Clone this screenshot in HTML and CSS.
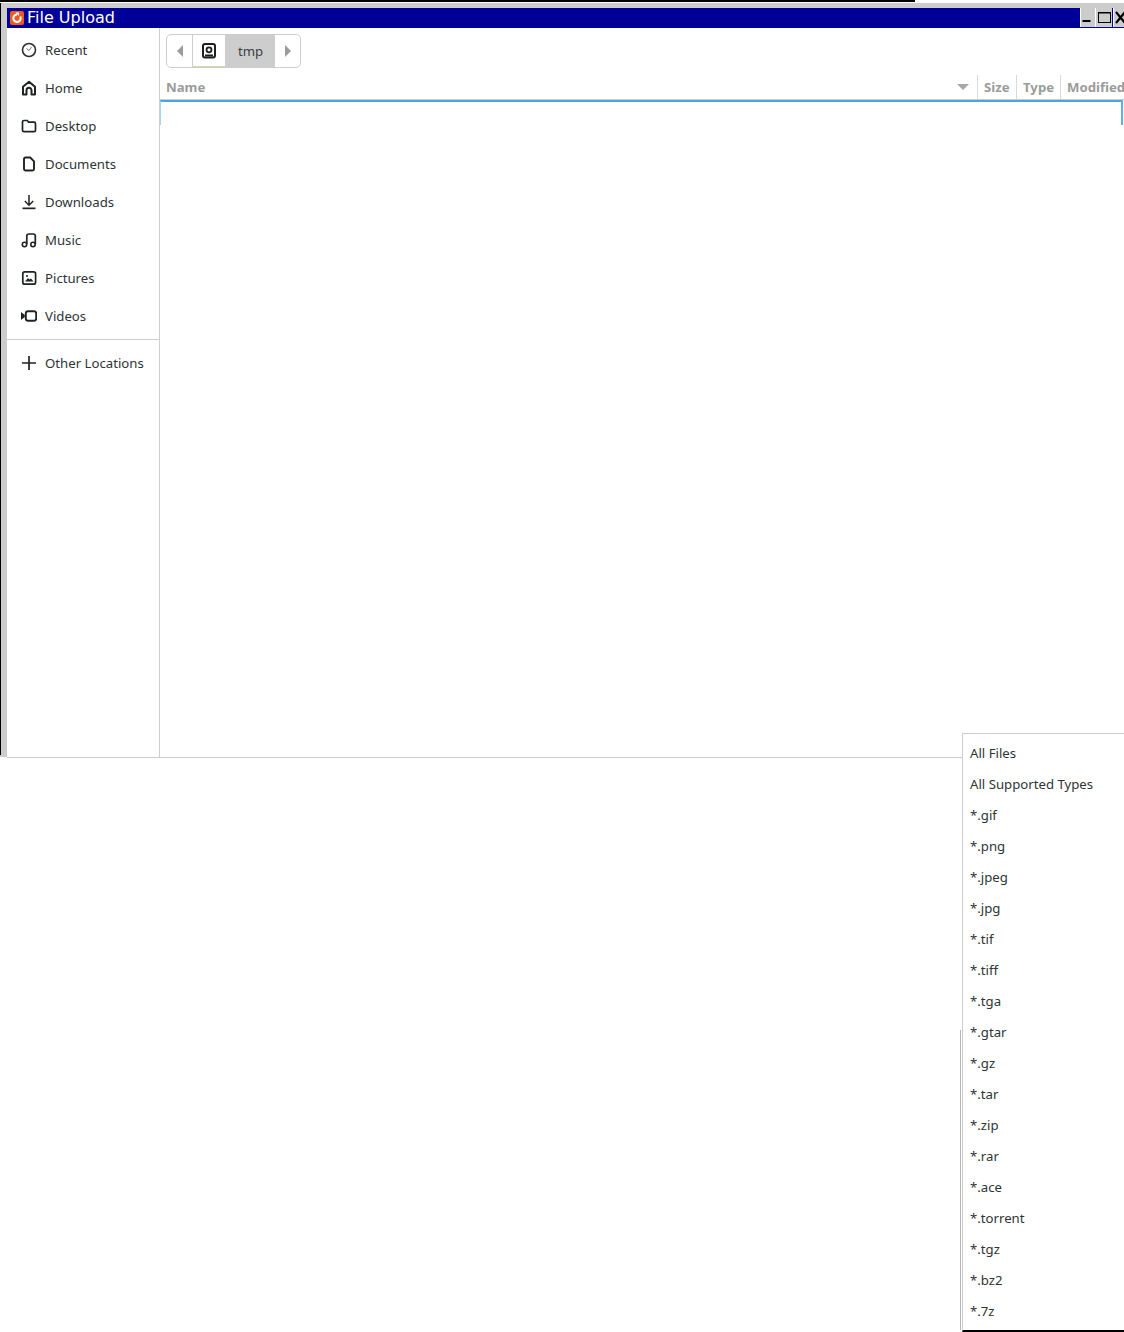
FILE: index.html
```html
<!DOCTYPE html>
<html lang="en">
<head>
<meta charset="utf-8">
<title>File Upload</title>
<link rel="stylesheet" href="styles.css">
</head>
<body>
<div class="strip"><div class="strip-black"></div><div class="strip-rest"></div></div>
<div class="window">
  <div class="titlebar">
    <svg class="app-icon" width="16" height="16" viewBox="0 0 16 16"><rect x="1" y="1" width="14" height="14" rx="2" fill="#ef5a22"/><path d="M8 4.500a3.700 3.700 0 1 0 3.300 2" fill="none" stroke="#fff" stroke-width="2"/><path d="M6.500 2.500h3.500v3.500z" fill="#fff"/></svg>
    <span class="title">File Upload</span>
    <div class="win-buttons">
      <span class="win-btn min"><svg width="15" height="19" viewBox="0 0 15 19"><rect x="1.500" y="12" width="8" height="2" fill="#000"/></svg></span>
      <span class="win-btn max"><svg width="16" height="19" viewBox="0 0 16 19"><rect x="2.500" y="4.500" width="12" height="10" fill="none" stroke="#000"/><rect x="2" y="4" width="13" height="1.500" fill="#000"/></svg></span>
      <span class="win-btn close"><svg width="10" height="19" viewBox="0 0 10 19"><path d="M2 4l9 11M11 4l-9 11" stroke="#000" stroke-width="2.200" fill="none"/></svg></span>
    </div>
  </div>
  <div class="content">
    <aside class="sidebar">
      <ul class="places">
        <li class="place"><svg class="ico" viewBox="0 0 16 16"><circle cx="8" cy="8" r="6.500" fill="none" stroke="#2b2f30" stroke-width="1.600"/><path d="M5.500 6.500L8 8.500l2.500-3.500" fill="none" stroke="#777" stroke-width="1"/></svg>Recent</li>
        <li class="place"><svg class="ico" viewBox="0 0 16 16"><path d="M2 14.500V6.800L8 1.800l6 5v7.700h-3.500v-4.200a2.500 2.500 0 0 0-5 0v4.200z" fill="none" stroke="#1f2324" stroke-width="2" stroke-linejoin="round"/></svg>Home</li>
        <li class="place"><svg class="ico" viewBox="0 0 16 16"><path d="M1.500 12.200V4a1.500 1.500 0 0 1 1.500-1.500h3.300l1.300 1.700h5.400a1.500 1.500 0 0 1 1.500 1.500v6.500a1.500 1.500 0 0 1-1.500 1.500H3a1.500 1.500 0 0 1-1.500-1.500z" fill="none" stroke="#1f2324" stroke-width="1.700"/></svg>Desktop</li>
        <li class="place"><svg class="ico" viewBox="0 0 16 16"><path d="M3 13V3a1.500 1.500 0 0 1 1.500-1.500h4.700l3.800 3.800V13a1.500 1.500 0 0 1-1.500 1.500H4.500A1.500 1.500 0 0 1 3 13z" fill="none" stroke="#1f2324" stroke-width="1.900"/></svg>Documents</li>
        <li class="place"><svg class="ico" viewBox="0 0 16 16"><path d="M8 1v10M3.800 7l4.200 4.200L12.200 7" fill="none" stroke="#1f2324" stroke-width="1.500"/><rect x="1.500" y="13.500" width="13" height="1.700" fill="#1f2324"/></svg>Downloads</li>
        <li class="place"><svg class="ico" viewBox="0 0 16 16"><path d="M5.800 12V4a2 2 0 0 1 2-2h4.500a2 2 0 0 1 2 2v8" fill="none" stroke="#1f2324" stroke-width="1.700"/><circle cx="3.500" cy="12.500" r="2.200" fill="none" stroke="#1f2324" stroke-width="1.600"/><circle cx="12" cy="12.500" r="2.200" fill="none" stroke="#1f2324" stroke-width="1.600"/></svg>Music</li>
        <li class="place"><svg class="ico" viewBox="0 0 16 16"><rect x="1.800" y="1.800" width="12.800" height="12.400" rx="2" fill="none" stroke="#1f2324" stroke-width="1.700"/><path d="M4 11.500L7 8l1.500 1.500L10 8.500l2.500 3z" fill="#1f2324"/><circle cx="6" cy="6" r="1" fill="#1f2324"/></svg>Pictures</li>
        <li class="place"><svg class="ico" viewBox="0 0 16 16"><path d="M0 4l3.800 3v2L0 12z" fill="#1f2324"/><rect x="4.800" y="3.200" width="10.400" height="9.600" rx="2.200" fill="none" stroke="#1f2324" stroke-width="1.900"/></svg>Videos</li>
      </ul>
      <div class="sep"></div>
      <div class="place other"><svg class="ico" viewBox="0 0 16 16"><path d="M8 1v14M1 8h14" stroke="#1f2324" stroke-width="1.700" fill="none"/></svg>Other Locations</div>
    </aside>
    <main class="main">
      <div class="pathbar">
        <span class="seg arrow"><svg width="6" height="12" viewBox="0 0 6 12"><path d="M6 0v12L0 6z" fill="#9a9c9a"/></svg></span>
        <span class="seg disk"><svg width="14" height="16" viewBox="0 0 14 16"><rect x="1" y="1" width="12" height="13.500" rx="2" fill="#fff" stroke="#1c1f20" stroke-width="2"/><circle cx="7" cy="6.800" r="2.500" fill="none" stroke="#1c1f20" stroke-width="1.800"/><rect x="3" y="11.500" width="8" height="2" fill="#1c1f20"/></svg></span>
        <span class="seg crumb">tmp</span>
        <span class="seg arrow last"><svg width="6" height="12" viewBox="0 0 6 12"><path d="M0 0v12l6-6z" fill="#9a9c9a"/></svg></span>
      </div>
      <div class="columns">
        <div class="col name">Name<svg width="12" height="6" viewBox="0 0 12 6"><path d="M0 0h12L6 6z" fill="#a5a7a5"/></svg></div>
        <div class="col size">Size</div>
        <div class="col type">Type</div>
        <div class="col last">Modified</div>
      </div>
      <div class="listing"></div>
    </main>
  </div>
</div>
<div class="dropdown-shadow"></div>
<ul class="dropdown">
  <li>All Files</li>
  <li>All Supported Types</li>
  <li>*.gif</li>
  <li>*.png</li>
  <li>*.jpeg</li>
  <li>*.jpg</li>
  <li>*.tif</li>
  <li>*.tiff</li>
  <li>*.tga</li>
  <li>*.gtar</li>
  <li>*.gz</li>
  <li>*.tar</li>
  <li>*.zip</li>
  <li>*.rar</li>
  <li>*.ace</li>
  <li>*.torrent</li>
  <li>*.tgz</li>
  <li>*.bz2</li>
  <li>*.7z</li>
</ul>
</body>
</html>
```
FILE: styles.css
```css
html, body { margin: 0; padding: 0; background: #fff; }
body { width: 1124px; height: 1332px; overflow: hidden; position: relative; font-family: "Noto Sans", sans-serif; font-size: 13.2px; color: #2e3436; }
ul { list-style: none; margin: 0; padding: 0; }

.strip { height: 3px; display: flex; }
.strip-black { width: 915px; height: 2px; background: #000; }
.strip-rest { flex: 1; }

.window { height: 754px; background: #ccc; padding: 5px 0 0 7px; box-sizing: border-box; position: relative; width: 1124px; }
.window::before { content: ""; position: absolute; left: 0; top: 0; bottom: 2px; width: 1px; background: #000; }

.titlebar { height: 20px; background: #000099; display: flex; align-items: center; color: #fff; }
.app-icon { margin-left: 2px; flex: none; }
.title { font-family: "DejaVu Sans", sans-serif; font-size: 16px; margin-left: 2px; line-height: 20px; }
.win-buttons { margin-left: auto; display: flex; height: 20px; }
.win-btn { background: #ccc; height: 19px; display: block; box-sizing: content-box; border-left: 1px solid #fff; }
.win-btn svg { display: block; }
.win-btn.min { width: 14px; }
.win-btn.max { width: 16px; }
.win-btn.close { width: 10px; overflow: hidden; margin-left: 1px; }

.content { display: flex; height: 729px; background: #fff; border-bottom: 1px solid #cdcdcd; }
.sidebar { width: 152px; flex: none; border-right: 1px solid #cdcdcd; background: #fff; }
.places { padding-top: 3px; }
.place { height: 38px; display: flex; align-items: center; padding-left: 14px; gap: 8px; color: #2e3436; line-height: 38px; }
.ico { width: 16px; height: 16px; flex: none; }
.sep { height: 1px; background: #cdcdcd; margin-top: 4px; }
.other { height: 46px; line-height: 46px; }

.main { flex: 1; min-width: 0; overflow: hidden; }
.pathbar { margin: 6px 0 0 6px; width: 135px; height: 34px; box-sizing: border-box; border: 1px solid #cdcdcd; border-radius: 5px; display: flex; overflow: hidden; background: #fff; }
.seg { display: flex; align-items: center; justify-content: center; }
.arrow { width: 25px; }
.disk { width: 33px; border-left: 1px solid #cdcdcd; box-sizing: border-box; border-bottom: 1px solid #d8d89a; }
.crumb { width: 50px; background: #cdcdcd; color: #3a3f41; padding-left: 1px; box-sizing: border-box; }
.arrow.last { flex: 1; }

.columns { display: flex; height: 25px; margin-top: 7px; font-weight: 700; color: #9a9c9a; line-height: 24px; box-sizing: border-box; border-bottom: 1px solid #cccccc; }
.col { padding: 0 0 0 6px; border-left: 1px solid #d8d8d8; height: 24px; white-space: nowrap; flex: none; box-sizing: border-box; overflow: hidden; }
.col.name { flex: 1; border-left: 0; display: flex; align-items: center; justify-content: space-between; padding-right: 8px; }
.col.size { width: 39px; }
.col.type { width: 44px; }
.col.last { width: 64px; }

.listing { height: 25px; border-top: 2px solid #4aa6e2; border-left: 1px solid #a6d6f5; border-right: 2px solid #62b0e6; margin-right: 1px; box-sizing: border-box; }

.dropdown-shadow { position: absolute; left: 960px; top: 1030px; width: 1px; height: 300px; background: #b5b5b5; }
.dropdown { position: absolute; left: 962px; top: 733px; width: 162px; height: 599px; box-sizing: border-box; background: #fff; border-left: 1px solid #cdcdcd; border-top: 1px solid #cdcdcd; border-bottom: 2px solid #000; padding: 4px 0 0 7px; }
.dropdown li { height: 31px; line-height: 31px; white-space: nowrap; color: #2e3436; }
```
